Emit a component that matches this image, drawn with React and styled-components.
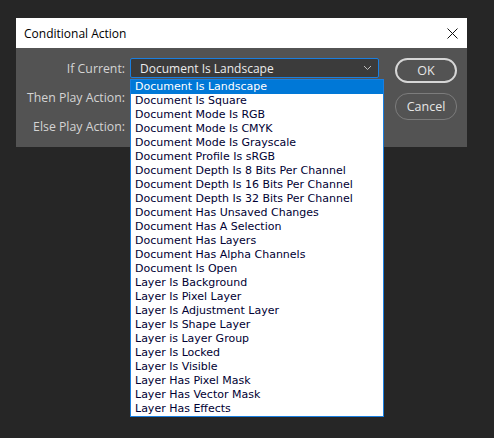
import React from 'react'
import styled, { createGlobalStyle } from 'styled-components'

const Global = createGlobalStyle`
  html, body {
    margin: 0;
    padding: 0;
    background: #262626;
    width: 494px;
    height: 438px;
    overflow: hidden;
  }
`

const Page = styled.div`
  padding: 18px 0 0 16px;
`

const Dialog = styled.div`
  width: 451px;
  display: flex;
  flex-direction: column;
  position: relative;
`

const TitleBar = styled.div`
  height: 30px;
  background: #ffffff;
  display: flex;
  align-items: center;
  justify-content: space-between;
  padding: 0 9px 0 8px;
  font-family: 'Open Sans', sans-serif;
  font-size: 12px;
  color: #000;
`

const Body = styled.div`
  background: #535353;
  padding: 10px 10px 11px 0;
  display: grid;
  grid-template-columns: 109px 249px 62px;
  column-gap: 5px;
  position: relative;
`

const Fields = styled.div`
  grid-column: 1 / 3;
  display: grid;
  grid-template-columns: 109px 249px;
  column-gap: 5px;
  row-gap: 9px;
  grid-auto-rows: 20px;
  align-items: center;
`

const Label = styled.div`
  text-align: right;
  font-family: 'Open Sans', sans-serif;
  font-size: 12.3px;
  color: #d4d4d4;
`

const Select = styled.div`
  height: 20px;
  box-sizing: border-box;
  border: 1px solid ${(p) => (p.$focus ? '#1a7fe0' : '#6a6a6a')};
  border-radius: 2px;
  background: #3b3b3b;
  display: flex;
  align-items: center;
  justify-content: space-between;
  padding: 0 6px 0 9px;
  font-family: 'Open Sans', sans-serif;
  font-size: 12px;
  color: #ececec;
`

const Buttons = styled.div`
  grid-column: 3;
  margin-left: 11px;
  margin-right: -11px;
  display: flex;
  flex-direction: column;
  gap: 10px;
`

const Button = styled.div`
  height: ${(p) => (p.$primary ? '25px' : '27px')};
  box-sizing: border-box;
  border: ${(p) => (p.$primary ? '2px solid #d6d6d6' : '1px solid #7c7c7c')};
  border-radius: 13px;
  display: flex;
  align-items: center;
  justify-content: center;
  font-family: 'Open Sans', sans-serif;
  font-size: 12.5px;
  color: #e6e6e6;
`

const List = styled.div`
  position: absolute;
  left: 114px;
  top: 31px;
  width: 254px;
  box-sizing: border-box;
  border: 1px solid #1a7fe0;
  background: #ffffff;
  z-index: 2;
`

const Item = styled.div`
  height: 14px;
  line-height: 14px;
  padding-left: 4px;
  font-family: 'DejaVu Sans', sans-serif;
  font-size: 11px;
  white-space: nowrap;
  color: ${(p) => (p.$active ? '#ffffff' : '#000033')};
  background: ${(p) => (p.$active ? '#0078d7' : 'transparent')};
`

const items = [
  'Document Is Landscape',
  'Document Is Square',
  'Document Mode Is RGB',
  'Document Mode Is CMYK',
  'Document Mode Is Grayscale',
  'Document Profile Is sRGB',
  'Document Depth Is 8 Bits Per Channel',
  'Document Depth Is 16 Bits Per Channel',
  'Document Depth Is 32 Bits Per Channel',
  'Document Has Unsaved Changes',
  'Document Has A Selection',
  'Document Has Layers',
  'Document Has Alpha Channels',
  'Document Is Open',
  'Layer Is Background',
  'Layer Is Pixel Layer',
  'Layer Is Adjustment Layer',
  'Layer Is Shape Layer',
  'Layer is Layer Group',
  'Layer Is Locked',
  'Layer Is Visible',
  'Layer Has Pixel Mask',
  'Layer Has Vector Mask',
  'Layer Has Effects',
]

const Chevron = () => (
  <svg width="9" height="6" viewBox="0 0 9 6">
    <path d="M1 1l3.5 3.5L8 1" fill="none" stroke="#bdbdbd" strokeWidth="1" />
  </svg>
)

const Close = () => (
  <svg width="11" height="11" viewBox="0 0 11 11">
    <path d="M0.5 0.5l10 10M10.5 0.5l-10 10" stroke="#111" strokeWidth="1" />
  </svg>
)

export default function App() {
  return (
    <Page>
      <Global />
      <Dialog>
        <TitleBar>
          <span>Conditional Action</span>
          <Close />
        </TitleBar>
        <Body>
          <Fields>
            <Label>If Current:</Label>
            <Select $focus>
              <span>Document Is Landscape</span>
              <Chevron />
            </Select>
            <Label>Then Play Action:</Label>
            <Select>
              <span />
              <Chevron />
            </Select>
            <Label>Else Play Action:</Label>
            <Select>
              <span />
              <Chevron />
            </Select>
          </Fields>
          <Buttons>
            <Button $primary>OK</Button>
            <Button>Cancel</Button>
          </Buttons>
          <List>
            {items.map((t, i) => (
              <Item key={t} $active={i === 0}>
                {t}
              </Item>
            ))}
          </List>
        </Body>
      </Dialog>
    </Page>
  )
}
